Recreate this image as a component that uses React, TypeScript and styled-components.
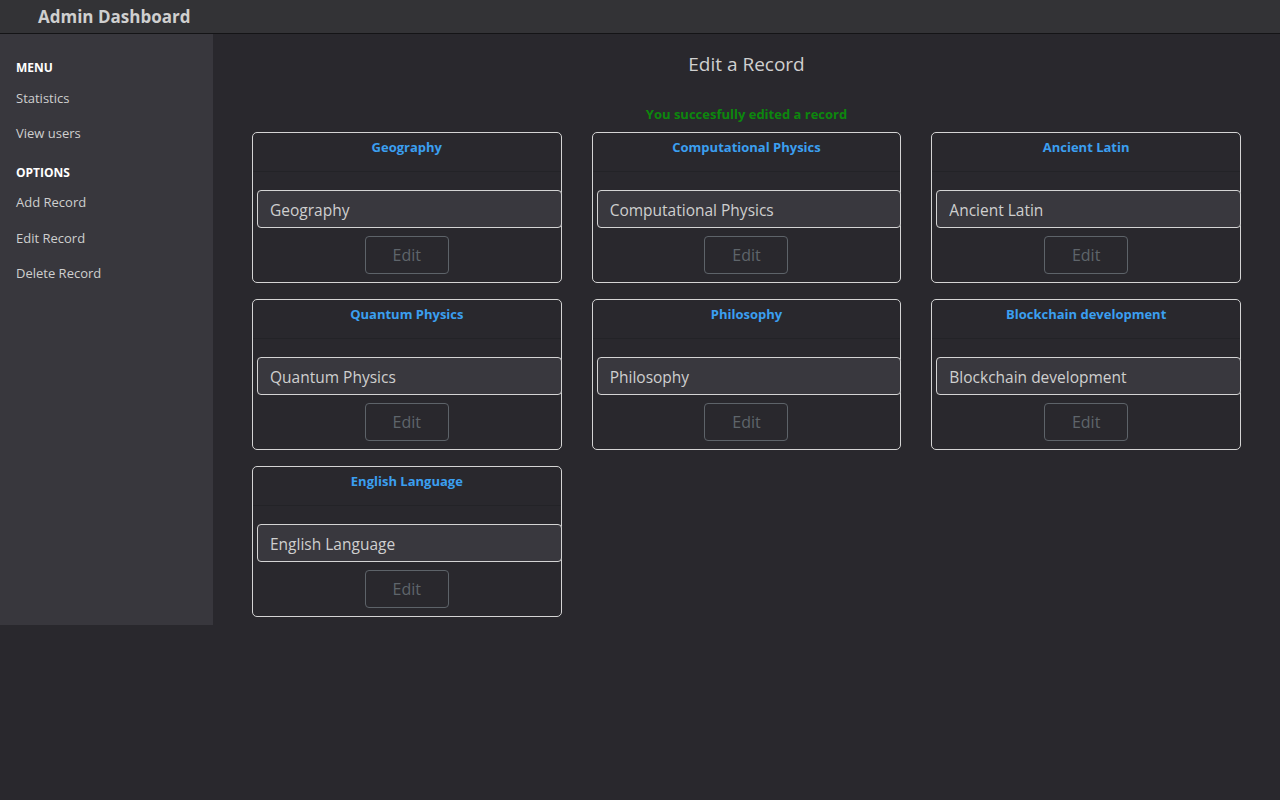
import styled, { createGlobalStyle } from "styled-components";

const GlobalStyle = createGlobalStyle`
  * {
    box-sizing: border-box;
  }
  body {
    margin: 0;
    background: #29282d;
    font-family: "Open Sans", "Noto Sans", sans-serif;
    color: #cccccc;
  }
`;

const records = [
  "Geography",
  "Computational Physics",
  "Ancient Latin",
  "Quantum Physics",
  "Philosophy",
  "Blockchain development",
  "English Language",
];

const menu = [
  {
    heading: "MENU",
    items: ["Statistics", "View users"],
  },
  {
    heading: "OPTIONS",
    items: ["Add Record", "Edit Record", "Delete Record"],
  },
];

const App = () => {
  return (
    <>
      <GlobalStyle />
      <TopBar>
        <Brand>Admin Dashboard</Brand>
      </TopBar>
      <Layout>
        <Sidebar>
          {menu.map((group) => (
            <MenuGroup key={group.heading}>
              <MenuHeading>{group.heading}</MenuHeading>
              {group.items.map((item) => (
                <MenuItem key={item}>{item}</MenuItem>
              ))}
            </MenuGroup>
          ))}
        </Sidebar>

        <Main>
          <PageTitle>Edit a Record</PageTitle>
          <Success>You succesfully edited a record</Success>
          <CardGrid>
            {records.map((name) => (
              <Card key={name}>
                <CardHeader>{name}</CardHeader>
                <CardBody>
                  <NameInput type="text" defaultValue={name} />
                  <EditButton disabled>Edit</EditButton>
                </CardBody>
              </Card>
            ))}
          </CardGrid>
        </Main>
      </Layout>
    </>
  );
};

export default App;

const TopBar = styled.header`
  height: 34px;
  background: #333336;
  border-bottom: 1px solid #141416;
  display: flex;
  align-items: center;
  padding-left: 38px;
`;

const Brand = styled.h1`
  margin: 0;
  font-size: 17px;
  font-weight: 700;
  color: #cfcfcf;
`;

const Layout = styled.div`
  display: flex;
  align-items: flex-start;
`;

const Sidebar = styled.nav`
  width: 213px;
  height: 591px;
  background: #38373d;
  padding: 26px 16px 0;
  flex-shrink: 0;
`;

const MenuGroup = styled.div`
  padding-bottom: 4px;
`;

const MenuHeading = styled.div`
  font-size: 12px;
  font-weight: 700;
  color: #ffffff;
  line-height: 16px;
  margin-bottom: 13.5px;
`;

const MenuItem = styled.div`
  font-size: 13px;
  color: #cfcfcf;
  line-height: 16px;
  margin-bottom: 19.5px;
`;

const Main = styled.main`
  flex: 1;
  padding: 0 39px;
  display: flex;
  flex-direction: column;
  align-items: center;
`;

const PageTitle = styled.h2`
  margin: 17px 0 0;
  font-size: 19px;
  font-weight: 400;
  line-height: 26px;
  color: #d0d0d0;
`;

const Success = styled.p`
  margin: 28px 0 0;
  font-size: 13px;
  font-weight: 700;
  line-height: 18px;
  color: #0d870d;
`;

const CardGrid = styled.div`
  width: 100%;
  display: grid;
  grid-template-columns: repeat(3, 1fr);
  column-gap: 30px;
  row-gap: 16px;
  margin-top: 9px;
`;

const Card = styled.div`
  height: 151px;
  border: 1px solid #d4d4d4;
  border-radius: 5px;
  display: flex;
  flex-direction: column;
`;

const CardHeader = styled.div`
  height: 39px;
  border-bottom: 1px solid #232327;
  text-align: center;
  padding-top: 5px;
  font-size: 13px;
  font-weight: 700;
  color: #3b9ff0;
`;

const CardBody = styled.div`
  display: flex;
  flex-direction: column;
  align-items: center;
  padding-top: 18px;
  gap: 8px;
`;

const NameInput = styled.input`
  align-self: flex-start;
  margin-left: 4px;
  width: calc(100% - 3px);
  height: 38px;
  background: #39383e;
  border: 1px solid #d4d4d4;
  border-radius: 4px;
  padding: 2px 12px 0;
  font-family: inherit;
  font-size: 15.5px;
  color: #cfcfcf;
  outline: none;
`;

const EditButton = styled.button`
  width: 84px;
  height: 38px;
  background: transparent;
  border: 1px solid #5d6369;
  border-radius: 4px;
  font-family: inherit;
  font-size: 16px;
  color: #5f656b;
`;
